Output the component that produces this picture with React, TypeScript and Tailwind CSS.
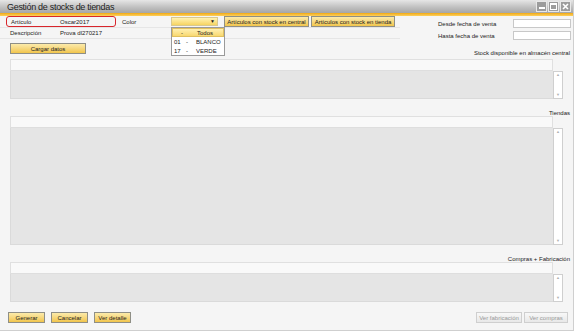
import React from "react";

const Btn = ({ children, w, disabled }: { children: React.ReactNode; w: string; disabled?: boolean }) => (
  <div
    className={
      "h-[11px] flex items-center justify-center text-[6px] leading-none border " +
      w +
      (disabled
        ? " bg-gradient-to-b from-[#f8f8f8] to-[#e8e8e8] border-[#cfcfcf] text-[#9a9a9a]"
        : " bg-gradient-to-b from-[#fcebaa] to-[#f1c54a] border-[#8f8f86] text-[#222]")
    }
  >
    {children}
  </div>
);

const Table = ({ bodyH }: { bodyH: string }) => (
  <div className="ml-[10px] w-[553px] flex flex-col">
    <div className="w-[543px] h-[12px] bg-[#f9f9f9] border border-[#e0e0e0] border-b-[#dedede]" />
    <div className="flex">
      <div className={"w-[543px] bg-[#e5e5e5] border-l border-b border-[#dadada] " + bodyH} />
      <div className={"w-[10px] bg-white border border-[#cfcfcf] flex flex-col justify-between items-center py-[1px] " + bodyH}>
        <span className="text-[4px] leading-none text-[#b0b0b0]">▲</span>
        <span className="text-[4px] leading-none text-[#b0b0b0]">▼</span>
      </div>
    </div>
  </div>
);

export default function App() {
  return (
    <div className="w-[577px] h-[336px] bg-white overflow-hidden font-['Liberation_Sans',Arial,sans-serif] text-[#222]">
      <div className="w-[574px] h-[331px] bg-[#f5f5f5] border-r border-b border-[#cfcfcf] flex flex-col">
        {/* title bar */}
        <div className="h-[13px] bg-gradient-to-b from-[#e6e6e6] via-[#c4c4c4] to-[#a6a6a6] flex items-center justify-between pl-[7px] pr-[2px]">
          <span className="text-[9px] tracking-[-0.3px] leading-none text-[#1e1e1e] mt-[2px]">Gestión de stocks de tiendas</span>
          <div className="flex gap-[1px]">
            <div className="w-[11px] h-[11px] bg-[#9c9c9c] border border-[#e8e8e8] flex items-end justify-center pb-[2px]">
              <div className="w-[6px] h-[2px] bg-white" />
            </div>
            <div className="w-[11px] h-[11px] bg-[#9c9c9c] border border-[#e8e8e8] flex items-center justify-center">
              <div className="w-[7px] h-[7px] border border-white border-t-2" />
            </div>
            <div className="w-[11px] h-[11px] bg-[#9c9c9c] border border-[#e8e8e8] flex items-center justify-center">
              <svg width="7" height="7" viewBox="0 0 7 7">
                <path d="M1 1L6 6M6 1L1 6" stroke="white" strokeWidth="1.6" />
              </svg>
            </div>
          </div>
        </div>
        <div className="h-[3px] bg-gradient-to-b from-[#f2a900] to-[#fbd05a]" />

        {/* header fields */}
        <div className="flex h-[25px] text-[6px] leading-none">
          <div className="flex flex-col w-[400px]">
            <div className="flex items-center h-[12px] border-b border-[#e6e6e6]">
              <div className="ml-[6px] w-[110px] h-[11px] border border-[#d8262c] rounded-[3px] flex items-center">
                <span className="pl-[4px] w-[53px]">Artículo</span>
                <span>Oscar2017</span>
              </div>
              <span className="ml-[6px] w-[49px]">Color</span>
              <div className="relative w-[47px] h-[9px] bg-gradient-to-b from-[#fff2b0] to-[#f6d460] border border-[#d8c890] flex items-center justify-end pr-[2px]">
                <span className="text-[5px] leading-none">▼</span>
                <div className="absolute left-[-1px] top-[9px] w-[54px] bg-white border border-[#9a9a9a] flex flex-col z-10">
                  <div className="flex h-[9px] items-center bg-gradient-to-b from-[#fff0b0] to-[#f8d870] border border-[#e0c060]">
                    <span className="w-[18px] text-center">-</span>
                    <span className="ml-[6px]">Todos</span>
                  </div>
                  <div className="flex h-[9px] items-center pl-[2px]">
                    <span className="w-[12px]">01</span>
                    <span className="w-[10px]">-</span>
                    <span>BLANCO</span>
                  </div>
                  <div className="flex h-[9px] items-center pl-[2px]">
                    <span className="w-[12px]">17</span>
                    <span className="w-[10px]">-</span>
                    <span>VERDE</span>
                  </div>
                </div>
              </div>
              <div className="ml-[6px] flex gap-[2px]">
                <Btn w="w-[85px]">Artículos con stock en central</Btn>
                <Btn w="w-[84px]">Artículos con stock en tienda</Btn>
              </div>
            </div>
            <div className="flex items-center h-[11px] border-b border-[#e6e6e6]">
              <span className="ml-[10px] w-[50px]">Descripción</span>
              <span>Prova dl270217</span>
            </div>
          </div>
          <div className="flex flex-col ml-[38px] pt-[3px] gap-[3px]">
            <div className="flex items-center h-[9px]">
              <span className="w-[75px]">Desde fecha de venta</span>
              <div className="w-[58px] h-[9px] bg-white border border-[#c8c8c8]" />
            </div>
            <div className="flex items-center h-[9px]">
              <span className="w-[75px]">Hasta fecha de venta</span>
              <div className="w-[58px] h-[9px] bg-white border border-[#c8c8c8]" />
            </div>
          </div>
        </div>

        {/* cargar datos row */}
        <div className="flex justify-between items-start h-[16px] mt-[2px] text-[6px] leading-none">
          <div className="ml-[10px]">
            <Btn w="w-[76px]">Cargar datos</Btn>
          </div>
          <span className="mr-[3px] mt-[7px]">Stock disponible en almacén central</span>
        </div>

        <Table bodyH="h-[28px]" />

        <div className="flex justify-end mt-[11px] h-[6px] text-[6px] leading-none">
          <span className="mr-[3px]">Tiendas</span>
        </div>
        <div className="mt-[0px]">
          <Table bodyH="h-[117px]" />
        </div>

        <div className="flex justify-end mt-[11px] h-[6px] text-[6px] leading-none">
          <span className="mr-[3px]">Compras + Fabricación</span>
        </div>
        <div className="mt-[0px]">
          <Table bodyH="h-[28px]" />
        </div>

        {/* bottom buttons */}
        <div className="flex justify-between mt-[10px] text-[6px] leading-none">
          <div className="flex gap-[6px] ml-[8px]">
            <Btn w="w-[37px]">Generar</Btn>
            <Btn w="w-[37px]">Cancelar</Btn>
            <Btn w="w-[37px]">Ver detalle</Btn>
          </div>
          <div className="flex gap-[2px] mr-[5px]">
            <Btn w="w-[46px]" disabled>Ver fabricación</Btn>
            <Btn w="w-[44px]" disabled>Ver compras</Btn>
          </div>
        </div>
      </div>
    </div>
  );
}
